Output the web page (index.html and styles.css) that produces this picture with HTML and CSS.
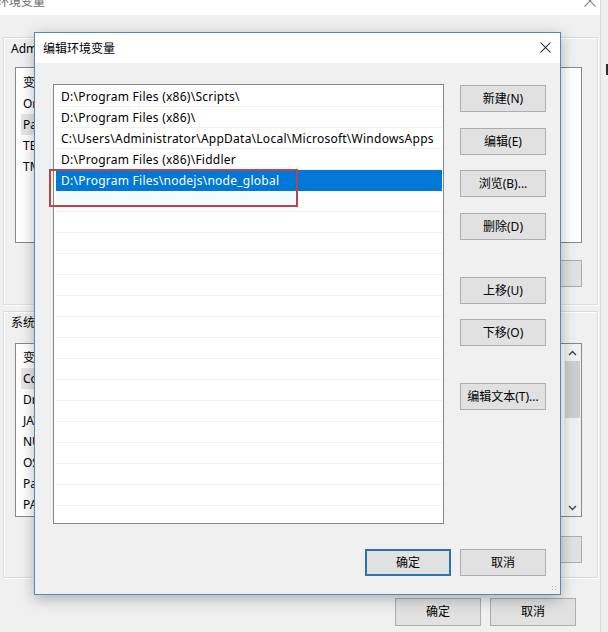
FILE: index.html
```html
<!DOCTYPE html>
<html lang="zh-CN">
<head>
<meta charset="utf-8">
<title>编辑环境变量</title>
<link rel="stylesheet" href="styles.css">
</head>
<body>
<div class="desk">
  <div class="bgwin">
    <div class="bg-title">
      <span class="bg-title-text">环境变量</span>
      <svg class="bg-close" width="12" height="12" viewBox="0 0 12 12"><path d="M0.5 0.5 L11.5 11.5 M11.5 0.5 L0.5 11.5" stroke="#8a8a8a" stroke-width="1.1" fill="none"/></svg>
    </div>
    <section class="group g1">
      <div class="glabel">Administrator 的用户变量(U)</div>
      <div class="lv lv1">
        <div class="lv-head"><span class="col1">变量</span></div>
        <div class="lv-row"><span class="col1">OneDrive</span></div>
        <div class="lv-row sel"><span class="col1">Path</span></div>
        <div class="lv-row"><span class="col1">TEMP</span></div>
        <div class="lv-row"><span class="col1">TMP</span></div>
      </div>
      <div class="gbtns">
        <button class="btn">新建(N)...</button>
        <button class="btn">编辑(E)...</button>
        <button class="btn">删除(D)</button>
      </div>
    </section>
    <section class="group g2">
      <div class="glabel">系统变量(S)</div>
      <div class="lv lv2">
        <div class="lv-main">
          <div class="lv-head"><span class="col1">变量</span></div>
          <div class="lv-row sel"><span class="col1">ComSpec</span></div>
          <div class="lv-row"><span class="col1">DriverData</span></div>
          <div class="lv-row"><span class="col1">JAVA_HOME</span></div>
          <div class="lv-row"><span class="col1">NUMBER_OF_PROCESSORS</span></div>
          <div class="lv-row"><span class="col1">OS</span></div>
          <div class="lv-row"><span class="col1">Path</span></div>
          <div class="lv-row"><span class="col1">PATHEXT</span></div>
        </div>
        <div class="vscroll">
          <svg class="arrow" width="9" height="6" viewBox="0 0 9 6"><path d="M1 5 L4.5 1.5 L8 5" stroke="#404040" stroke-width="1.4" fill="none"/></svg>
          <div class="track"><div class="thumb"></div></div>
          <svg class="arrow" width="9" height="6" viewBox="0 0 9 6"><path d="M1 1 L4.5 4.5 L8 1" stroke="#404040" stroke-width="1.4" fill="none"/></svg>
        </div>
      </div>
      <div class="gbtns gbtns2">
        <button class="btn">新建(W)...</button>
        <button class="btn">编辑(I)...</button>
        <button class="btn">删除(L)</button>
      </div>
    </section>
    <div class="bg-foot">
      <button class="btn">确定</button>
      <button class="btn">取消</button>
    </div>
  </div>
  <div class="sliver"><div class="mark"></div></div>

  <div class="dialog">
    <div class="dlg-title">
      <span class="dlg-title-text">编辑环境变量</span>
      <svg class="dlg-close" width="11" height="11" viewBox="0 0 11 11"><path d="M0.5 0.5 L10.5 10.5 M10.5 0.5 L0.5 10.5" stroke="#111" stroke-width="1.05" fill="none"/></svg>
    </div>
    <div class="dlg-body">
      <div class="dlg-main">
        <div class="plist">
          <div class="prow">D:\Program Files (x86)\Scripts\</div>
          <div class="prow">D:\Program Files (x86)\</div>
          <div class="prow">C:\Users\Administrator\AppData\Local\Microsoft\WindowsApps</div>
          <div class="prow">D:\Program Files (x86)\Fiddler</div>
          <div class="prow sel">D:\Program Files\nodejs\node_global</div>
          <div class="prow edit"></div>
          <div class="prow"></div>
          <div class="prow"></div>
          <div class="prow"></div>
          <div class="prow"></div>
          <div class="prow"></div>
          <div class="prow"></div>
          <div class="prow"></div>
          <div class="prow"></div>
          <div class="prow"></div>
          <div class="prow"></div>
          <div class="prow"></div>
          <div class="prow"></div>
          <div class="prow"></div>
          <div class="prow"></div>
          <div class="prow"></div>
        </div>
        <div class="dlg-btns">
          <button class="btn b-new">新建(N)</button>
          <button class="btn b-edit">编辑(E)</button>
          <button class="btn b-browse">浏览(B)...</button>
          <button class="btn b-del">删除(D)</button>
          <button class="btn b-up">上移(U)</button>
          <button class="btn b-down">下移(O)</button>
          <button class="btn b-text">编辑文本(T)...</button>
        </div>
      </div>
      <div class="dlg-foot">
        <button class="btn default">确定</button>
        <button class="btn">取消</button>
      </div>
    </div>
    <div class="redbox"></div>
    <div class="grip"></div>
  </div>
</div>
</body>
</html>
```

FILE: styles.css
```css
* { box-sizing: border-box; }
html, body { margin: 0; padding: 0; }
body {
  background: #f0f0f0;
  font-family: "Noto Sans", "Noto Sans CJK SC", sans-serif;
  font-size: 12px;
  color: #000;
  width: 608px;
  height: 632px;
  overflow: hidden;
}
.desk {
  position: relative;
  display: flex;
  width: 608px;
  height: 632px;
}

/* background window */
.bgwin {
  width: 601px;
  height: 632px;
  background: #f0f0f0;
  border-right: 1px solid #dadada;
  display: flex;
  flex-direction: column;
}
.bg-title {
  height: 15px;
  background: #fff;
  display: flex;
  align-items: flex-start;
  justify-content: space-between;
  overflow: hidden;
}
.bg-title-text {
  margin-top: -5px;
  margin-left: -3px;
  line-height: 14px;
  color: #6a6a6a;
}
.bg-close { margin-top: -5px; margin-right: 4px; }

.group {
  margin-left: 3px;
  width: 595px;
  border: 1px solid #dcdcdc;
  box-shadow: inset 1px 1px 0 #fff, 1px 1px 0 #fff;
  padding: 4px 14px 0 11px;
  display: flex;
  flex-direction: column;
}
.g1 { margin-top: 22px; height: 268px; }
.g2 { margin-top: 6px; height: 267px; }
.glabel { line-height: 14px; height: 14px; white-space: nowrap; margin-left: -4px; }
.lv {
  background: #fff;
  border: 1px solid #828790;
  width: 567px;
  overflow: hidden;
}
.lv1 { margin-top: 11px; height: 176px; padding-top: 2px; }
.lv2 { margin-top: 13px; height: 174px; padding-top: 1px; display: flex; }
.lv-main { flex: 1; }
.lv-head, .lv-row {
  display: flex;
  align-items: center;
  white-space: nowrap;
  padding-left: 7px;
}
.lv-head { height: 23px; }
.lv-row { height: 21px; margin-left: 5px; padding-left: 0; }
.lv-row .col1 { align-self: stretch; display: flex; align-items: center; padding-left: 2px; }
.lv-row.sel .col1 { background: #e6e6e6; }
.col1 { width: 160px; flex: none; }
.vscroll {
  width: 17px;
  background: #f0f0f0;
  display: flex;
  flex-direction: column;
  align-items: center;
  margin-top: -1px;
}
.vscroll .arrow { margin: 6px 0 5px; flex: none; }
.vscroll .track { flex: 1; width: 15px; }
.vscroll .thumb { height: 57px; background: #cdcdcd; }
.gbtns {
  display: flex;
  justify-content: flex-end;
  gap: 9px;
  margin-top: 17px;
  width: 567px;
}
.gbtns2 { margin-top: 19px; }
.bg-foot {
  display: flex;
  justify-content: flex-end;
  gap: 9px;
  margin-top: 20px;
  padding-right: 24px;
}
.bg-foot .btn { height: 28px; }

.sliver { flex: 1; display: flex; flex-direction: column; align-items: flex-end; }
.mark { margin-top: 64px; width: 2px; height: 11px; background: #2d2d2d; }

.btn {
  font-family: "Noto Sans", "Noto Sans CJK SC", sans-serif;
  font-size: 12px;
  color: #000;
  width: 86px;
  height: 27px;
  padding: 0;
  background: #e1e1e1;
  border: 1px solid #adadad;
  border-radius: 0;
  flex: none;
  line-height: 1;
}

/* dialog */
.dialog {
  position: absolute;
  left: 34px;
  top: 32px;
  width: 527px;
  height: 563px;
  border: 1px solid #4f88bd;
  background: #f0f0f0;
  box-shadow: 0 4px 14px rgba(0, 0, 0, 0.28);
  display: flex;
  flex-direction: column;
}
.dlg-title {
  height: 30px;
  background: #fff;
  display: flex;
  align-items: center;
  justify-content: space-between;
  padding: 0 9px 0 8px;
  flex: none;
}
.dlg-title-text { font-size: 12px; color: #000; }
.dlg-close { margin-top: -1px; }
.dlg-body {
  flex: 1;
  padding: 21px 14px 18px 18px;
  display: flex;
  flex-direction: column;
}
.dlg-main { display: flex; gap: 16px; }
.plist {
  width: 391px;
  height: 440px;
  background: #fff;
  border: 1px solid #828790;
  padding: 1px 1px 0 2px;
  overflow: hidden;
}
.prow {
  height: 21px;
  line-height: 22px;
  padding-left: 5px;
  border-bottom: 1px solid #f0f0f0;
  white-space: nowrap;
  letter-spacing: 0.25px;
  overflow: hidden;
}
.prow.sel { background: #0078d7; color: #fff; border-bottom-color: #0078d7; }
.prow.edit { background: linear-gradient(to right, #f5faff 0, #f5faff 240px, #fff 240px); }
.dlg-btns { display: flex; flex-direction: column; }
.b-new { margin-top: 1px; }
.b-edit { margin-top: 16px; }
.b-browse { margin-top: 15px; }
.b-del { margin-top: 16px; }
.b-up { margin-top: 37px; }
.b-down { margin-top: 15px; }
.b-text { margin-top: 37px; }
.dlg-foot {
  display: flex;
  justify-content: flex-end;
  gap: 9px;
  margin-top: 25px;
}
.btn.default { border: 2px solid #2f72b3; }
.redbox {
  position: absolute;
  left: 14px;
  top: 136px;
  width: 249px;
  height: 38px;
  border: 2px solid #b4474a;
}
.grip {
  position: absolute;
  right: 3px;
  bottom: 3px;
  width: 6px;
  height: 6px;
  background: radial-gradient(circle, #b5b5b5 0.8px, transparent 1px) 0 0 / 3px 3px;
}
```
